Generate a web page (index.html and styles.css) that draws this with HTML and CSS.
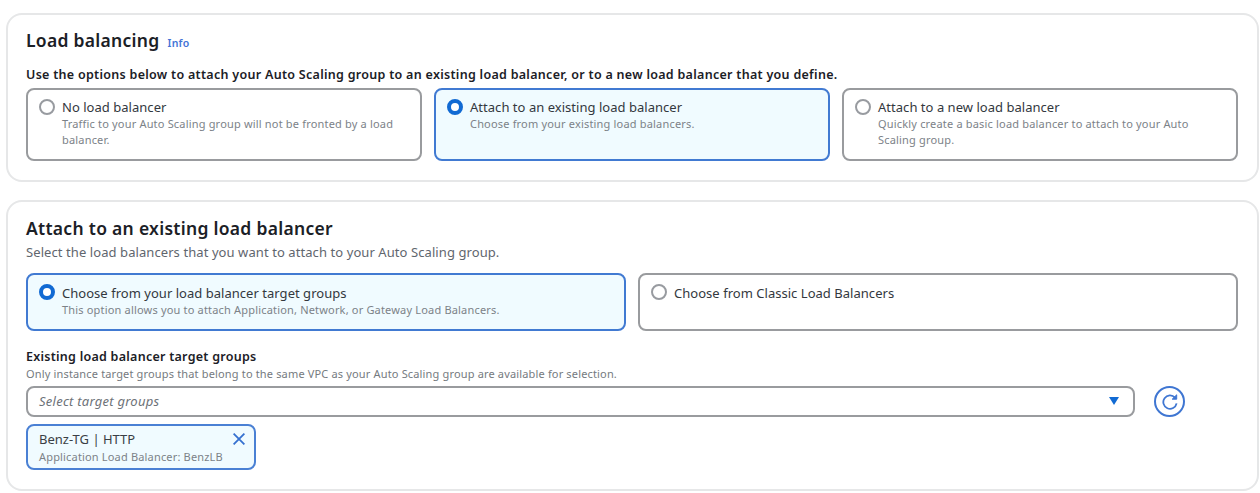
FILE: index.html
```html
<!DOCTYPE html>
<html lang="en">
<head>
<meta charset="utf-8">
<title>Load balancing</title>
<link rel="stylesheet" href="styles.css">
</head>
<body>
<main class="page">
  <section class="card card-options">
    <header class="card-header">
      <h2 class="title">Load balancing</h2>
      <a class="info">Info</a>
    </header>
    <p class="field-label wide">Use the options below to attach your Auto Scaling group to an existing load balancer, or to a new load balancer that you define.</p>
    <div class="tiles three">
      <label class="tile">
        <span class="radio"></span>
        <span class="tile-text">
          <span class="tile-label">No load balancer</span>
          <span class="tile-desc">Traffic to your Auto Scaling group will not be fronted by a load<br>balancer.</span>
        </span>
      </label>
      <label class="tile selected">
        <span class="radio"></span>
        <span class="tile-text">
          <span class="tile-label">Attach to an existing load balancer</span>
          <span class="tile-desc">Choose from your existing load balancers.</span>
        </span>
      </label>
      <label class="tile">
        <span class="radio"></span>
        <span class="tile-text">
          <span class="tile-label">Attach to a new load balancer</span>
          <span class="tile-desc">Quickly create a basic load balancer to attach to your Auto<br>Scaling group.</span>
        </span>
      </label>
    </div>
  </section>

  <section class="card card-attach">
    <h2 class="title">Attach to an existing load balancer</h2>
    <p class="subtitle">Select the load balancers that you want to attach to your Auto Scaling group.</p>
    <div class="tiles two">
      <label class="tile selected">
        <span class="radio"></span>
        <span class="tile-text">
          <span class="tile-label">Choose from your load balancer target groups</span>
          <span class="tile-desc">This option allows you to attach Application, Network, or Gateway Load Balancers.</span>
        </span>
      </label>
      <label class="tile">
        <span class="radio"></span>
        <span class="tile-text">
          <span class="tile-label">Choose from Classic Load Balancers</span>
        </span>
      </label>
    </div>
    <p class="field-label">Existing load balancer target groups</p>
    <p class="hint">Only instance target groups that belong to the same VPC as your Auto Scaling group are available for selection.</p>
    <div class="select-row">
      <div class="select">
        <span class="placeholder">Select target groups</span>
        <svg class="caret" viewBox="0 0 10 8"><path d="M0 0H10L5 8Z"/></svg>
      </div>
      <button class="refresh" aria-label="Refresh">
        <svg viewBox="0 0 16 16"><path d="M14.6 9.4A6.7 6.7 0 1 1 13 3.6"/><path d="M14.7 .8V5.2H10.2Z" fill="#3f76d2" stroke-width="1"/></svg>
      </button>
    </div>
    <div class="token">
      <div class="token-text">
        <span class="token-label">Benz-TG | HTTP</span>
        <span class="token-desc">Application Load Balancer: BenzLB</span>
      </div>
      <svg class="close" viewBox="0 0 12 12"><path d="M.6 .6L11.4 11.4M11.4 .6L.6 11.4"/></svg>
    </div>
  </section>
</main>
</body>
</html>
```
FILE: styles.css
```css
* { box-sizing: border-box; }

body {
  margin: 0;
  background: #fff;
  color: #1b2026;
  font-family: "Noto Sans", "Open Sans", sans-serif;
}

h2, p { margin: 0; font-weight: inherit; }

.page {
  display: flex;
  flex-direction: column;
  gap: 18px;
  padding: 13px 1px 0 6px;
}

.card {
  border: 2px solid #e6e7e8;
  border-radius: 16px;
  padding: 0 19px 0 18px;
}

.card-options { height: 169px; padding-top: 13px; }
.card-attach { height: 291px; padding-top: 14px; }

.card-header { display: flex; align-items: baseline; gap: 8px; height: 24px; }

.title { font-size: 17.5px; font-weight: 600; line-height: 24px; letter-spacing: .29px; }
.info { color: #4273d6; font-size: 10.5px; font-weight: 600; letter-spacing: .2px; }

.field-label { font-size: 12.5px; font-weight: 600; line-height: 18px; letter-spacing: .26px; margin-top: 17px; }
.field-label.wide { letter-spacing: .29px; margin-top: 14px; }
.subtitle { color: #5f666e; font-size: 13px; line-height: 18px; letter-spacing: .08px; margin-top: 3px; }
.hint { color: #757a80; font-size: 11px; line-height: 16px; letter-spacing: .16px; }

.tiles { display: grid; gap: 12px; }
.three { grid-template-columns: repeat(3, 1fr); margin-top: 4px; }
.three .tile { height: 73px; }
.two { grid-template-columns: repeat(2, 1fr); margin-top: 12px; }
.two .tile { height: 58px; padding-top: 9px; }

.tile {
  display: flex;
  gap: 7px;
  padding: 8px 11px;
  border: 2px solid #999b9e;
  border-radius: 8px;
}
.tile.selected { background: #f0fbff; border-color: #417ad2; }

.radio {
  flex: none;
  width: 16px;
  height: 16px;
  margin-top: 1px;
  border: 2px solid #989ba0;
  border-radius: 50%;
  background: #fff;
}
.two .radio { margin-top: 0; }
.selected .radio { border: 4.5px solid #116ad3; }

.tile-text { display: flex; flex-direction: column; white-space: nowrap; }
.tile-label { color: #33383e; font-size: 13px; line-height: 18px; letter-spacing: .03px; }
.tile-desc { color: #7c8288; font-size: 11px; line-height: 15.5px; letter-spacing: .18px; }

.select-row { display: flex; align-items: center; gap: 19px; margin-top: 4px; }
.select {
  display: flex;
  align-items: center;
  justify-content: space-between;
  width: 1109px;
  height: 31px;
  padding: 0 14px 2px 11px;
  border: 2px solid #999b9e;
  border-radius: 8px;
}
.placeholder { color: #6d7278; font-size: 13px; font-style: italic; letter-spacing: .25px; }
.caret { width: 10px; height: 8px; fill: #116ad3; }

.refresh {
  display: flex;
  align-items: center;
  justify-content: center;
  width: 31px;
  height: 31px;
  padding: 0;
  border: 2px solid #3f76d2;
  border-radius: 50%;
  background: #fff;
}
.refresh svg { width: 16px; height: 16px; fill: none; stroke: #3f76d2; stroke-width: 1.8; }

.token {
  display: flex;
  justify-content: space-between;
  width: 230px;
  height: 46px;
  margin-top: 7px;
  padding: 4px 9px 0 11px;
  border: 2px solid #4a80d4;
  border-radius: 8px;
  background: #f0fbff;
}
.token-text { display: flex; flex-direction: column; }
.token-label { color: #3a3f45; font-size: 13px; line-height: 18px; }
.token-desc { color: #7c8288; font-size: 11px; line-height: 17px; letter-spacing: .17px; }
.close { width: 12px; height: 12px; margin-top: 3px; stroke: #3570d0; stroke-width: 1.8; }
```
